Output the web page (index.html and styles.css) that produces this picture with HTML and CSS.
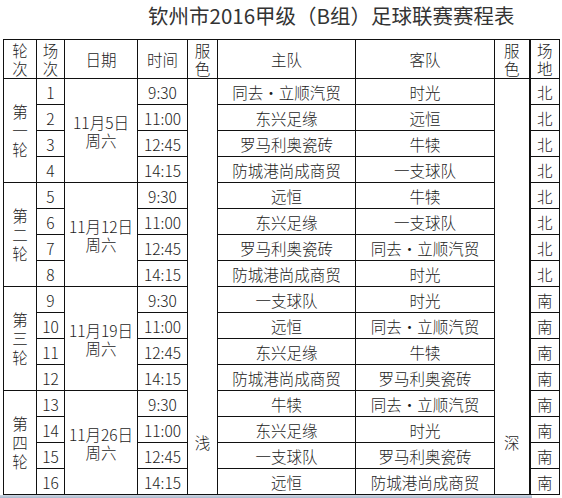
FILE: index.html
```html
<!DOCTYPE html>
<html lang="zh-CN">
<head>
<meta charset="utf-8">
<title>钦州市2016甲级（B组）足球联赛赛程表</title>
<link rel="stylesheet" href="styles.css">
</head>
<body>
<div class="page">
  <h1 class="title">钦州市2016甲级（B组）足球联赛赛程表</h1>
  <table class="schedule">
    <colgroup>
      <col class="c-round"><col class="c-no"><col class="c-date"><col class="c-time"><col class="c-color1">
      <col class="c-home"><col class="c-away"><col class="c-color2"><col class="c-venue">
    </colgroup>
    <thead>
      <tr class="head">
        <th class="stack">轮<br>次</th>
        <th class="stack">场<br>次</th>
        <th>日期</th>
        <th>时间</th>
        <th class="stack">服<br>色</th>
        <th>主队</th>
        <th>客队</th>
        <th class="stack">服<br>色</th>
        <th class="stack venue-l">场<br>地</th>
      </tr>
    </thead>
    <tbody>
      <tr>
        <td rowspan="4" class="round">第<br>一<br>轮</td>
        <td>1</td>
        <td rowspan="4" class="date">11月5日<br>周六</td>
        <td>9:30</td>
        <td rowspan="16" class="kit">浅</td>
        <td>同去·立顺汽贸</td>
        <td>时光</td>
        <td rowspan="16" class="kit">深</td>
        <td class="venue-l">北</td>
      </tr>
      <tr><td>2</td><td>11:00</td><td>东兴足缘</td><td>远恒</td><td class="venue-l">北</td></tr>
      <tr><td>3</td><td>12:45</td><td>罗马利奥瓷砖</td><td>牛犊</td><td class="venue-l">北</td></tr>
      <tr><td>4</td><td>14:15</td><td>防城港尚成商贸</td><td>一支球队</td><td class="venue-l">北</td></tr>

      <tr>
        <td rowspan="4" class="round">第<br>二<br>轮</td>
        <td>5</td>
        <td rowspan="4" class="date">11月12日<br>周六</td>
        <td>9:30</td><td>远恒</td><td>牛犊</td><td class="venue-l">北</td>
      </tr>
      <tr><td>6</td><td>11:00</td><td>东兴足缘</td><td>一支球队</td><td class="venue-l">北</td></tr>
      <tr><td>7</td><td>12:45</td><td>罗马利奥瓷砖</td><td>同去·立顺汽贸</td><td class="venue-l">北</td></tr>
      <tr><td>8</td><td>14:15</td><td>防城港尚成商贸</td><td>时光</td><td class="venue-l">北</td></tr>

      <tr>
        <td rowspan="4" class="round">第<br>三<br>轮</td>
        <td>9</td>
        <td rowspan="4" class="date">11月19日<br>周六</td>
        <td>9:30</td><td>一支球队</td><td>时光</td><td class="venue-l">南</td>
      </tr>
      <tr><td>10</td><td>11:00</td><td>远恒</td><td>同去·立顺汽贸</td><td class="venue-l">南</td></tr>
      <tr><td>11</td><td>12:45</td><td>东兴足缘</td><td>牛犊</td><td class="venue-l">南</td></tr>
      <tr><td>12</td><td>14:15</td><td>防城港尚成商贸</td><td>罗马利奥瓷砖</td><td class="venue-l">南</td></tr>

      <tr>
        <td rowspan="4" class="round">第<br>四<br>轮</td>
        <td>13</td>
        <td rowspan="4" class="date">11月26日<br>周六</td>
        <td>9:30</td><td>牛犊</td><td>同去·立顺汽贸</td><td class="venue-l">南</td>
      </tr>
      <tr><td>14</td><td>11:00</td><td>东兴足缘</td><td>时光</td><td class="venue-l">南</td></tr>
      <tr><td>15</td><td>12:45</td><td>一支球队</td><td>罗马利奥瓷砖</td><td class="venue-l">南</td></tr>
      <tr><td>16</td><td>14:15</td><td>远恒</td><td>防城港尚成商贸</td><td class="venue-l">南</td></tr>
    </tbody>
  </table>
  <div class="bottom-bar"></div>
</div>
</body>
</html>
```

FILE: styles.css
```css
html, body {
  margin: 0;
  padding: 0;
  background: #ffffff;
}

.page {
  width: 562px;
  height: 498px;
  overflow: hidden;
  font-family: "Noto Sans CJK SC", "Noto Sans", sans-serif;
  color: #1c1c1c;
}

.title {
  margin: 0;
  height: 39px;
  padding-left: 148px;
  font-size: 20.5px;
  font-weight: normal;
  line-height: 31px;
  color: #333333;
  white-space: nowrap;
}

.schedule {
  margin-left: 3px;
  width: 556px;
  table-layout: fixed;
  border-collapse: collapse;
  font-size: 15.5px;
  font-weight: 300;
}

.c-round { width: 33px; }
.c-no { width: 28px; }
.c-date { width: 73px; }
.c-time { width: 50px; }
.c-color1 { width: 30px; }
.c-home { width: 138px; }
.c-away { width: 139px; }
.c-color2 { width: 35px; }
.c-venue { width: 30px; }

.schedule th,
.schedule td {
  border: 1px solid #111111;
  padding: 0;
  text-align: center;
  vertical-align: middle;
  white-space: nowrap;
  overflow: hidden;
}

.head {
  height: 39px;
}

.schedule th {
  font-weight: 300;
  font-size: 15.5px;
  line-height: 18px;
}

.schedule tbody tr {
  height: 26px;
}

.schedule td {
  line-height: 20px;
}

.round {
  line-height: 19px !important;
}

.date {
  line-height: 18px !important;
}

.kit {
  vertical-align: bottom !important;
  padding-bottom: 42px !important;
}

.venue-l {
  border-left: 2px solid #111111 !important;
}

.bottom-bar {
  width: 532px;
  height: 4px;
  background: linear-gradient(#cdd6e2, #9eafc6);
}
```
